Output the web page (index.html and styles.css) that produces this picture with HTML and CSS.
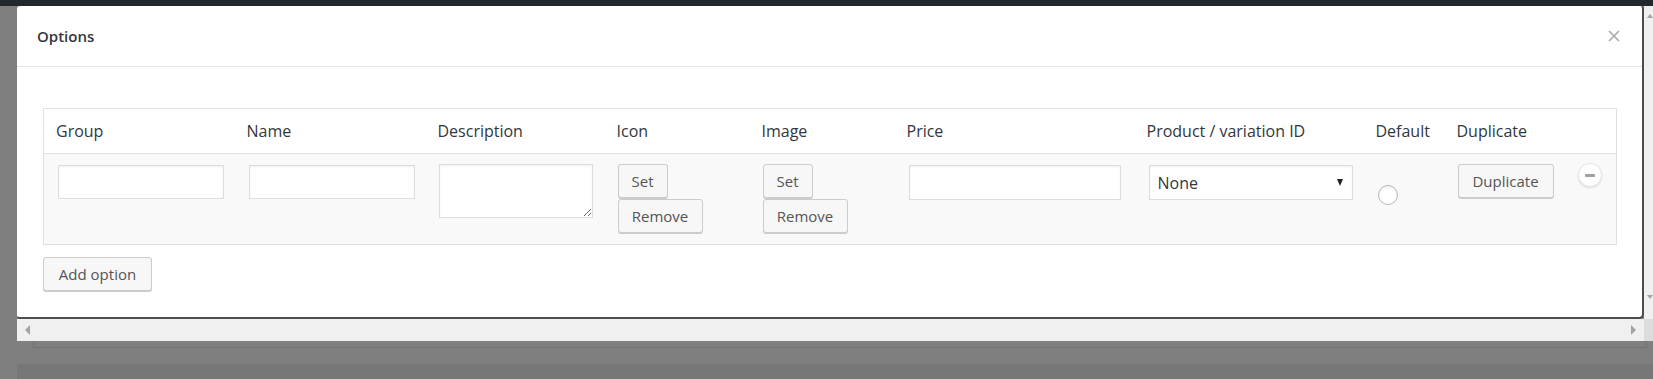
FILE: index.html
```html
<!DOCTYPE html>
<html lang="en">
<head>
    <meta charset="UTF-8">
    <meta name="viewport" content="width=device-width, initial-scale=1.0">
    <title>Options</title>
    <link rel="stylesheet" href="styles.css">
</head>
<body>
    <div class="adminbar"></div>
    <div class="screen">
        <div class="frame">
            <div class="frame-main">
                <div class="modal">
                    <div class="modal-header">
                        <span class="modal-title">Options</span>
                        <button class="modal-close" aria-label="Close">
                            <svg width="12" height="12" viewBox="0 0 12 12">
                                <path d="M1 1 L11 11 M11 1 L1 11" stroke="#aaaaaa" stroke-width="1.6" fill="none"/>
                            </svg>
                        </button>
                    </div>
                    <div class="modal-body">
                        <table class="options-table">
                            <colgroup>
                                <col class="col-group">
                                <col class="col-name">
                                <col class="col-desc">
                                <col class="col-icon">
                                <col class="col-image">
                                <col class="col-price">
                                <col class="col-product">
                                <col class="col-default">
                                <col class="col-duplicate">
                                <col class="col-remove">
                            </colgroup>
                            <thead>
                                <tr>
                                    <th>Group</th>
                                    <th>Name</th>
                                    <th>Description</th>
                                    <th>Icon</th>
                                    <th>Image</th>
                                    <th>Price</th>
                                    <th>Product / variation ID</th>
                                    <th>Default</th>
                                    <th>Duplicate</th>
                                    <th></th>
                                </tr>
                            </thead>
                            <tbody>
                                <tr>
                                    <td><input type="text" class="input-short"></td>
                                    <td><input type="text" class="input-short"></td>
                                    <td><textarea class="input-desc"></textarea></td>
                                    <td>
                                        <button class="button button-set">Set</button>
                                        <button class="button button-remove">Remove</button>
                                    </td>
                                    <td>
                                        <button class="button button-set">Set</button>
                                        <button class="button button-remove">Remove</button>
                                    </td>
                                    <td><input type="text" class="input-price"></td>
                                    <td>
                                        <span class="select-wrap">
                                            <select class="input-select">
                                                <option>None</option>
                                            </select>
                                        </span>
                                    </td>
                                    <td><input type="radio" class="radio" name="default"></td>
                                    <td><button class="button button-duplicate">Duplicate</button></td>
                                    <td class="cell-remove"><span class="remove-row"></span></td>
                                </tr>
                            </tbody>
                        </table>
                        <button class="button button-add">Add option</button>
                    </div>
                </div>
                <div class="vscroll">
                    <span class="arrow arrow-up"></span>
                    <span class="arrow arrow-down"></span>
                </div>
            </div>
            <div class="hscroll">
                <div class="hscroll-track">
                    <span class="arrow arrow-left"></span>
                    <span class="arrow arrow-right"></span>
                </div>
                <div class="hscroll-corner"></div>
            </div>
            <div class="page-box"></div>
            <div class="page-footer"></div>
        </div>
    </div>
</body>
</html>
```

FILE: styles.css
```css
body {
    margin: 0;
    background-color: #7f7f7f;
    font-family: "Open Sans", "Noto Sans", sans-serif;
    color: #32373c;
}
.adminbar {
    height: 6px;
    background-color: #23282d;
}
.screen {
    padding-left: 17px;
}
.frame {
    width: 1636px;
}
.frame-main {
    display: flex;
}

/* modal */
.modal {
    width: 1625px;
    background-color: #ffffff;
    border-right: 2px solid #4d4d4d;
    border-bottom: 2px solid #4d4d4d;
    border-radius: 3px 3px 5px 3px;
}
.modal-header {
    height: 60px;
    border-bottom: 1px solid #e5e5e5;
    display: flex;
    align-items: center;
    justify-content: space-between;
    padding: 0 22px 0 20px;
}
.modal-title {
    font-size: 15px;
    font-weight: 600;
    color: #32373c;
    margin-top: -1px;
}
.modal-close {
    border: 0;
    background: none;
    padding: 0;
    width: 12px;
    height: 12px;
    display: flex;
    margin-top: -1px;
}
.modal-body {
    padding: 41px 26px 26px 26px;
}

/* table */
.options-table {
    width: 1573px;
    table-layout: fixed;
    border-collapse: collapse;
    border: 1px solid #e1e1e1;
}
.col-group { width: 191px; }
.col-name { width: 191px; }
.col-desc { width: 179px; }
.col-icon { width: 145px; }
.col-image { width: 145px; }
.col-price { width: 240px; }
.col-product { width: 229px; }
.col-default { width: 81px; }
.col-duplicate { width: 119px; }
.col-remove { width: 53px; }
.options-table th {
    height: 44px;
    padding: 0 0 0 12px;
    text-align: left;
    font-weight: 400;
    font-size: 16px;
    color: #32373c;
    background-color: #ffffff;
    border-bottom: 1px solid #e1e1e1;
    white-space: nowrap;
}
.options-table td {
    padding: 10px 0 11px 13px;
    vertical-align: top;
    background-color: #f9f9f9;
}
.options-table input[type="text"],
.options-table textarea,
.input-select {
    box-sizing: border-box;
    border: 1px solid #dddddd;
    background-color: #ffffff;
    box-shadow: inset 0 1px 2px rgba(0, 0, 0, 0.07);
    font-family: inherit;
    font-size: 16px;
    color: #32373c;
    outline: none;
}
.input-short {
    width: 166px;
    height: 34px;
    margin: 1px 0 0 1px;
}
.input-desc {
    display: block;
    width: 154px;
    height: 54px;
    margin: 0;
}
.input-price {
    width: 212px;
    height: 35px;
    margin: 1px 0 0 1px;
}
.select-wrap {
    position: relative;
    display: inline-block;
    margin: 1px 0 0 1px;
}
.select-wrap::after {
    content: "";
    position: absolute;
    right: 10px;
    top: 14px;
    border-left: 3.5px solid transparent;
    border-right: 3.5px solid transparent;
    border-top: 7px solid #222222;
}
.input-select {
    -webkit-appearance: none;
    appearance: none;
    display: block;
    width: 204px;
    height: 35px;
    padding: 0 0 0 8px;
    border-radius: 0;
}
.radio {
    -webkit-appearance: none;
    appearance: none;
    display: block;
    width: 20px;
    height: 20px;
    margin: 21px 0 0 1px;
    border: 1px solid #b4b9be;
    border-radius: 50%;
    background-color: #ffffff;
    box-shadow: inset 0 1px 2px rgba(0, 0, 0, 0.1);
    box-sizing: border-box;
}

/* buttons */
.button {
    box-sizing: border-box;
    height: 34px;
    padding: 0;
    border: 1px solid #cccccc;
    border-radius: 3px;
    background-color: #f7f7f7;
    box-shadow: 0 1px 0 #cccccc;
    font-family: inherit;
    font-size: 15px;
    color: #555555;
    text-align: center;
}
.button-set {
    display: block;
    width: 50px;
    margin-bottom: 1px;
}
.button-remove {
    display: block;
    width: 85px;
}
.button-duplicate {
    width: 96px;
}
.button-add {
    display: block;
    width: 109px;
    margin-top: 12px;
}
.cell-remove {
    text-align: center;
}
.options-table td.cell-remove {
    padding: 9px 0 11px 0;
}
.remove-row {
    display: inline-block;
    position: relative;
    width: 24px;
    height: 24px;
    border-radius: 50%;
    background-color: #ffffff;
    border: 1px solid #e6e6e6;
    box-shadow: 0 1px 2px rgba(0, 0, 0, 0.12);
    box-sizing: border-box;
}
.remove-row::after {
    content: "";
    position: absolute;
    left: 6px;
    top: 10px;
    width: 10px;
    height: 3px;
    border-radius: 1px;
    background-color: #a0a0a0;
}

/* scrollbars behind the modal */
.vscroll {
    width: 9px;
    background-color: #f0f0f0;
    display: flex;
    flex-direction: column;
    justify-content: space-between;
    align-items: flex-end;
    padding: 8px 0 20px 0;
    box-sizing: border-box;
}
.hscroll {
    display: flex;
    height: 22px;
}
.hscroll-track {
    flex: 1;
    background-color: #f0f0f0;
    display: flex;
    align-items: center;
    justify-content: space-between;
    padding: 0 8px 0 8px;
}
.hscroll-corner {
    width: 9px;
    background-color: #dcdcdc;
}
.arrow {
    display: block;
    width: 0;
    height: 0;
}
.arrow-up {
    border-left: 3px solid transparent;
    border-right: 3px solid transparent;
    border-bottom: 4px solid #a3a3a3;
}
.arrow-down {
    border-left: 3px solid transparent;
    border-right: 3px solid transparent;
    border-top: 4px solid #a3a3a3;
}
.arrow-left {
    border-top: 5px solid transparent;
    border-bottom: 5px solid transparent;
    border-right: 5px solid #a3a3a3;
}
.arrow-right {
    border-top: 5px solid transparent;
    border-bottom: 5px solid transparent;
    border-left: 5px solid #a3a3a3;
}
.page-box {
    margin-left: 16px;
    width: 1612px;
    height: 6px;
    border: 1px solid #717171;
    border-top: 0;
}
.page-footer {
    margin-top: 16px;
    height: 15px;
    background-color: #777777;
}
```
